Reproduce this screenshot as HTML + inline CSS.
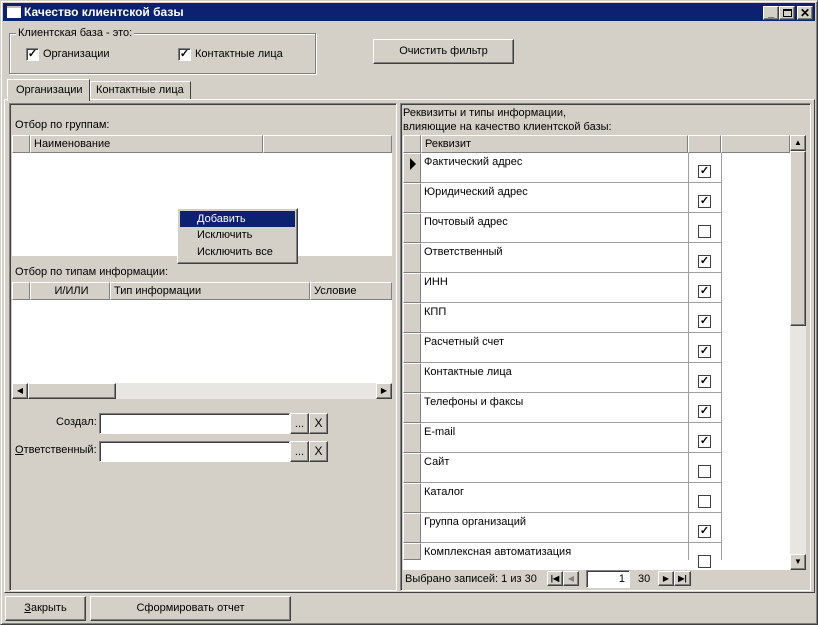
<!DOCTYPE html>
<html><head><meta charset="utf-8"><style>
*{box-sizing:border-box;margin:0;padding:0}
body{width:818px;height:625px;background:#d4d0c8;font-family:"Liberation Sans",sans-serif;font-size:11px;color:#000;position:relative;overflow:hidden}
.a{position:absolute}
.win{left:0;top:0;width:818px;height:625px;border:1px solid;border-color:#d4d0c8 #404040 #404040 #d4d0c8;box-shadow:inset 1px 1px #fff,inset -1px -1px #808080}
.title{left:3px;top:3px;width:812px;height:18px;background:#0c2270;color:#fff;font-weight:bold;font-size:12px;line-height:18px;padding-left:21px}
.btn{border:1px solid;border-color:#fff #404040 #404040 #fff;box-shadow:inset -1px -1px #808080;background:#d4d0c8;text-align:center}
.sunk{border:1px solid;border-color:#808080 #fff #fff #808080;box-shadow:inset 1px 1px #404040}
.etch{border:1px solid #808080;box-shadow:1px 1px #fff,inset 1px 1px #fff}
.cb{width:13px;height:13px;background:#fff;border:1px solid;border-color:#808080 #fff #fff #808080;box-shadow:inset 1px 1px #404040;font-size:11px;line-height:10px;text-align:center;font-weight:bold}
.hdr{background:#d4d0c8;border:1px solid;border-color:#fff #808080 #808080 #fff;height:18px;line-height:16px;padding-left:3px}
.white{background:#fff}
</style></head><body>
<div class="a win"></div>
<div class="a title">Качество клиентской базы</div>
<div class="a" style="left:7px;top:6px;width:14px;height:12px;background:#fff;border-top:2px solid #c0c0c0"></div>
<div class="a btn" style="left:763px;top:6px;width:16px;height:14px;font-size:11px;line-height:12px;font-weight:bold">_</div>
<div class="a btn" style="left:779px;top:6px;width:16px;height:14px"><div class="a" style="left:3px;top:2px;width:9px;height:8px;border:1px solid #000;border-top-width:2px"></div></div>
<div class="a btn" style="left:797px;top:6px;width:16px;height:14px;font-size:12px;line-height:12px;font-weight:bold">✕</div>

<div class="a etch" style="left:9px;top:33px;width:307px;height:41px"></div>
<div class="a" style="left:16px;top:27px;background:#d4d0c8;padding:0 2px">Клиентская база - это:</div>
<div class="a cb" style="left:26px;top:48px">✓</div><div class="a" style="left:43px;top:48px">Организации</div>
<div class="a cb" style="left:178px;top:48px">✓</div><div class="a" style="left:195px;top:48px">Контактные лица</div>
<div class="a btn" style="left:373px;top:39px;width:141px;height:25px;line-height:22px">Очистить фильтр</div>

<div class="a" style="left:4px;top:99px;width:811px;height:494px;border:1px solid;border-color:#fff #404040 #404040 #fff"></div>
<div class="a" style="left:7px;top:79px;width:83px;height:22px;background:#d4d0c8;border:1px solid;border-color:#fff #404040 transparent #fff;border-bottom:none;line-height:20px;padding-left:8px">Организации</div>
<div class="a" style="left:90px;top:81px;width:101px;height:18px;border:1px solid;border-color:#fff #404040 transparent #fff;border-bottom:none;line-height:17px;padding-left:5px">Контактные лица</div>

<div class="a sunk" style="left:9px;top:103px;width:388px;height:488px"></div>
<div class="a" style="left:15px;top:119px">Отбор по группам:</div>
<div class="a white" style="left:12px;top:135px;width:380px;height:121px"></div>
<div class="a hdr" style="left:12px;top:135px;width:18px"></div>
<div class="a hdr" style="left:30px;top:135px;width:233px">Наименование</div>
<div class="a hdr" style="left:263px;top:135px;width:129px"></div>

<div class="a" style="left:15px;top:266px">Отбор по типам информации:</div>
<div class="a white" style="left:12px;top:282px;width:380px;height:101px"></div>
<div class="a hdr" style="left:12px;top:282px;width:18px"></div>
<div class="a hdr" style="left:30px;top:282px;width:80px;text-align:center">И/ИЛИ</div>
<div class="a hdr" style="left:110px;top:282px;width:200px">Тип информации</div>
<div class="a hdr" style="left:310px;top:282px;width:82px">Условие</div>
<div class="a" style="left:12px;top:383px;width:380px;height:16px;background:#e8e6e2"></div>
<div class="a btn" style="left:12px;top:383px;width:16px;height:16px;font-size:8px;line-height:14px">◀</div>
<div class="a btn" style="left:28px;top:383px;width:88px;height:16px"></div>
<div class="a btn" style="left:376px;top:383px;width:16px;height:16px;font-size:8px;line-height:14px">▶</div>

<div class="a" style="left:56px;top:416px">Создал:</div>
<div class="a sunk white" style="left:99px;top:413px;width:191px;height:21px"></div>
<div class="a btn" style="left:290px;top:413px;width:19px;height:21px;line-height:20px">...</div>
<div class="a btn" style="left:309px;top:413px;width:19px;height:21px;line-height:19px;font-size:12px">X</div>
<div class="a" style="left:15px;top:444px"><u>О</u>тветственный:</div>
<div class="a sunk white" style="left:99px;top:441px;width:191px;height:21px"></div>
<div class="a btn" style="left:290px;top:441px;width:19px;height:21px;line-height:20px">...</div>
<div class="a btn" style="left:309px;top:441px;width:19px;height:21px;line-height:19px;font-size:12px">X</div>

<div class="a btn" style="left:177px;top:208px;width:121px;height:56px;text-align:left"></div>
<div class="a" style="left:180px;top:211px;width:115px;height:16px;background:#0c2270;color:#fff;line-height:16px;padding-left:17px">Добавить</div>
<div class="a" style="left:197px;top:229px">Исключить</div>
<div class="a" style="left:197px;top:246px">Исключить все</div>

<div class="a sunk" style="left:400px;top:103px;width:411px;height:488px"></div>
<div class="a" style="left:403px;top:106px;line-height:14px">Реквизиты и типы информации,<br>влияющие на качество клиентской базы:</div>
<div class="a white" style="left:403px;top:135px;width:387px;height:435px"></div>
<div class="a hdr" style="left:403px;top:135px;width:18px"></div>
<div class="a hdr" style="left:421px;top:135px;width:267px">Реквизит</div>
<div class="a hdr" style="left:688px;top:135px;width:33px"></div>
<div class="a hdr" style="left:721px;top:135px;width:69px"></div>
<div class="a" style="left:790px;top:135px;width:16px;height:435px;background:#e8e6e2"></div>
<div class="a btn" style="left:790px;top:135px;width:16px;height:16px;font-size:8px;line-height:14px">▲</div>
<div class="a btn" style="left:790px;top:151px;width:16px;height:175px"></div>
<div class="a btn" style="left:790px;top:554px;width:16px;height:16px;font-size:8px;line-height:14px">▼</div>
<div id="rows"></div>
<script>
var items=[["Фактический адрес",1],["Юридический адрес",1],["Почтовый адрес",0],["Ответственный",1],["ИНН",1],["КПП",1],["Расчетный счет",1],["Контактные лица",1],["Телефоны и факсы",1],["E-mail",1],["Сайт",0],["Каталог",0],["Группа организаций",1],["Комплексная автоматизация",0]];
var h="";items.forEach(function(it,i){var y=153+i*30;var hh=i==13?17:30;
h+='<div class="a" style="left:403px;top:'+y+'px;width:18px;height:'+hh+'px;background:#d4d0c8;border:1px solid;border-color:#fff #808080 #808080 #fff"></div>';
if(i==0)h+='<div class="a" style="left:410px;top:'+(y+5)+'px;width:0;height:0;border-left:6px solid #000;border-top:6px solid transparent;border-bottom:6px solid transparent"></div>';
h+='<div class="a" style="left:421px;top:'+y+'px;width:300px;height:'+hh+'px;border-bottom:'+(i==13?0:1)+'px solid #a0a0a0"></div>';
h+='<div class="a" style="left:688px;top:'+y+'px;width:1px;height:'+hh+'px;background:#a0a0a0"></div><div class="a" style="left:721px;top:'+y+'px;width:1px;height:'+hh+'px;background:#a0a0a0"></div>';
h+='<div class="a" style="left:424px;top:'+(y+3)+'px">'+it[0]+'</div>';
h+='<div class="a cb" style="left:698px;top:'+(y+12)+'px;box-shadow:none;border:1px solid #404040">'+(it[1]?'✓':'')+'</div>';});
document.getElementById("rows").innerHTML=h;
</script>
<div class="a" style="left:405px;top:573px">Выбрано записей: 1 из 30</div>
<div class="a btn" style="left:547px;top:571px;width:16px;height:15px;font-size:8px;line-height:13px;font-weight:bold">|◀</div>
<div class="a btn" style="left:563px;top:571px;width:16px;height:15px;font-size:8px;line-height:13px;color:#808080">◀</div>
<div class="a sunk white" style="left:586px;top:570px;width:44px;height:18px;text-align:right;padding-right:4px;line-height:16px">1</div>
<div class="a" style="left:638px;top:573px">30</div>
<div class="a btn" style="left:658px;top:571px;width:16px;height:15px;font-size:8px;line-height:13px">▶</div>
<div class="a btn" style="left:674px;top:571px;width:17px;height:15px;font-size:8px;line-height:13px;font-weight:bold">▶|</div>

<div class="a btn" style="left:5px;top:596px;width:81px;height:25px;line-height:23px"><u>З</u>акрыть</div>
<div class="a btn" style="left:90px;top:596px;width:201px;height:25px;line-height:23px">Сформировать отчет</div>
</body></html>
